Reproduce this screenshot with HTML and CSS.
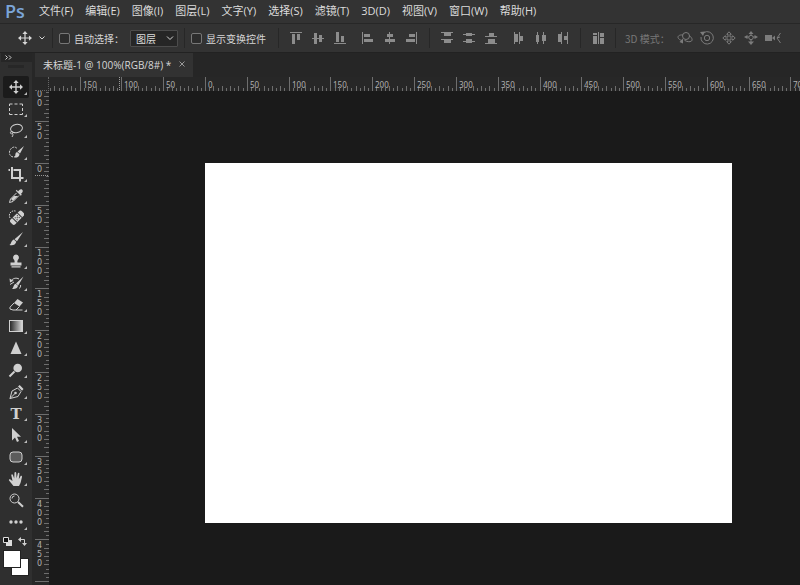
FILE: index.html
```html
<!DOCTYPE html>
<html lang="zh-CN">
<head>
    <meta charset="UTF-8">
    <meta name="viewport" content="width=device-width, initial-scale=1.0">
    <title>未标题-1</title>
    <link rel="stylesheet" href="styles.css">
</head>
<body>

    <header class="menubar">
        <span class="logo">Ps</span>
        <nav class="menu">
            <a href="#">文件(F)</a>
            <a href="#">编辑(E)</a>
            <a href="#">图像(I)</a>
            <a href="#">图层(L)</a>
            <a href="#">文字(Y)</a>
            <a href="#">选择(S)</a>
            <a href="#">滤镜(T)</a>
            <a href="#">3D(D)</a>
            <a href="#">视图(V)</a>
            <a href="#">窗口(W)</a>
            <a href="#">帮助(H)</a>
        </nav>
    </header>

    <div class="options">
        <button type="button" class="preset" aria-label="移动工具">
            <svg width="14" height="14" viewBox="0 0 16 16"><path d="M8 2v12M2 8h12" stroke="currentColor" stroke-width="1.4"/><path d="M8 0l3 3.500H5zM8 16l3-3.500H5zM0 8l3.500-3v6zM16 8l-3.500-3v6z"/></svg>
            <svg width="8" height="8" viewBox="0 0 8 8"><path class="line" d="M1.500 2.500L4 5l2.500-2.500"/></svg>
        </button>
        <span class="sep"></span>
        <label class="check"><input type="checkbox">自动选择：</label>
        <span class="select">
            <select aria-label="自动选择">
                <option>图层</option>
                <option>组</option>
            </select>
            <svg width="8" height="8" viewBox="0 0 8 8"><path class="line" d="M1 2.500l3 3 3-3"/></svg>
        </span>
        <span class="sep"></span>
        <label class="check transform"><input type="checkbox">显示变换控件</label>
        <span class="sep"></span>

        <div class="group">
            <button type="button" aria-label="顶对齐"><svg viewBox="0 0 14 14"><path d="M1 1h12v1H1zM3 3h3v10H3zM8 3h3v6H8z"/></svg></button>
            <button type="button" aria-label="垂直居中对齐"><svg viewBox="0 0 14 14"><path d="M1 7h12v1H1zM3 2h3v11H3zM8 4h3v7H8z"/></svg></button>
            <button type="button" aria-label="底对齐"><svg viewBox="0 0 14 14"><path d="M1 12h12v1H1zM3 1h3v10H3zM8 5h3v6H8z"/></svg></button>
        </div>
        <div class="group">
            <button type="button" aria-label="左对齐"><svg viewBox="0 0 14 14"><path d="M1 1h1v12H1zM3 3h6v3H3zM3 8h9v3H3z"/></svg></button>
            <button type="button" aria-label="水平居中对齐"><svg viewBox="0 0 14 14"><path d="M6 1h1v12H6zM4 3h6v3H4zM2 8h10v3H2z"/></svg></button>
            <button type="button" aria-label="右对齐"><svg viewBox="0 0 14 14"><path d="M11 1h1v12h-1zM4 3h6v3H4zM1 8h9v3H1z"/></svg></button>
        </div>
        <span class="sep"></span>
        <div class="group">
            <button type="button" aria-label="按顶分布"><svg viewBox="0 0 14 14"><path d="M1 1h12v1H1zM4 2h7v3H4zM1 8h12v1H1zM4 9h7v3H4z"/></svg></button>
            <button type="button" aria-label="垂直居中分布"><svg viewBox="0 0 14 14"><path d="M1 3h12v1H1zM4 2h6v3H4zM1 10h12v1H1zM4 8h6v4H4z"/></svg></button>
            <button type="button" aria-label="按底分布"><svg viewBox="0 0 14 14"><path d="M1 5h12v1H1zM5 2h5v3H5zM1 12h12v1H1zM4 8h7v4H4z"/></svg></button>
        </div>
        <div class="group">
            <button type="button" aria-label="按左分布"><svg viewBox="0 0 14 14"><path d="M2 1h1v12H2zM3 3h3v8H3zM7 1h1v12H7zM8 5h3v5H8z"/></svg></button>
            <button type="button" aria-label="水平居中分布"><svg viewBox="0 0 14 14"><path d="M3 1h1v12H3zM2 4h3v7H2zM9 1h1v12H9zM8 4h4v6H8z"/></svg></button>
            <button type="button" aria-label="按右分布"><svg viewBox="0 0 14 14"><path d="M5 1h1v12H5zM2 3h3v8H2zM11 1h1v12h-1zM8 5h3v4H8z"/></svg></button>
        </div>
        <span class="sep"></span>
        <div class="group">
            <button type="button" aria-label="自动对齐图层"><svg viewBox="0 0 14 14"><path d="M2 2h4v2H2zM2 5h4v8H2zM9 2h4v4H9zM9 7h4v6H9zM7 1h1v12H7z"/></svg></button>
        </div>
        <span class="sep"></span>
        <span class="mode">3D 模式：</span>
        <div class="group dim">
            <button type="button" aria-label="旋转"><svg width="16" height="14" viewBox="0 0 16 14"><circle class="line" cx="9" cy="5" r="3.500"/><path class="line" d="M6 4C2 3.500 0 5.500 1.500 7.500c1 1.300 3 2 4.500 2.200M12 4.500c2.500 1.500 4 4 2.500 5.500-1.500 1.400-5 .6-7-.7"/><path d="M6 7.500v5L2.500 11z"/></svg></button>
            <button type="button" aria-label="滚动"><svg viewBox="0 0 14 14"><path class="line" d="M4 1.500A6.200 6.200 0 1 1 1 6"/><circle class="line" cx="7" cy="7" r="2.700"/><path d="M0 1l5-.5L3 5z"/></svg></button>
            <button type="button" aria-label="平移"><svg viewBox="0 0 14 14"><path class="line" d="M7 .8l2.300 2.500H8v2.700h2.700V4.700L13.200 7l-2.500 2.300V8H8v2.700h1.300L7 13.200l-2.300-2.500H6V8H3.300v1.300L.8 7l2.500-2.300V6H6V3.300H4.700z"/></svg></button>
            <button type="button" aria-label="滑动"><svg viewBox="0 0 14 14"><path d="M7 0l2.500 3h-5zM0 6l3.500-2v4zM14 6l-3.500-2v4zM7 14l3-3.500H4z"/><path class="line" d="M7 2v2M3 6h2M11 6H9M7 8.500V11"/><circle class="line" cx="7" cy="6.500" r="2.200"/></svg></button>
            <button type="button" aria-label="缩放相机"><svg width="16" height="14" viewBox="0 0 16 14"><path d="M0 4h7v6H0zM7 7l3-2.500v5z"/><path class="line" d="M15.500 2L12 7l3.500 5M12 7l3-1"/></svg></button>
        </div>
    </div>

    <div class="workspace">
        <aside class="toolbox">
            <div class="toolbox-head"><svg width="7" height="5" viewBox="0 0 7 5"><path class="line" d="M.5 .5l2 2-2 2M4 .5l2 2-2 2"/></svg></div>
            <div class="grip"></div>
            <div class="tools">
                <button type="button" class="tool active" aria-label="移动工具"><svg viewBox="0 0 16 16"><path d="M8 2v12M2 8h12" stroke="currentColor" stroke-width="1.400"/><path d="M8 1l2.700 3H5.300zM8 15l2.700-3H5.300zM1 8l3-2.700v5.400zM15 8l-3-2.700v5.400z"/></svg></button>
                <button type="button" class="tool" aria-label="矩形选框工具"><svg viewBox="0 0 16 16"><path class="line" d="M1.500 5V3h3M6.500 3h3M11.500 3h3v2M14.500 7v3M14.500 12v1.500h-3M9.500 13.500h-3M4.500 13.500h-3V12M1.500 10V7"/></svg></button>
                <button type="button" class="tool" aria-label="套索工具"><svg viewBox="0 0 16 16"><ellipse class="line" cx="8.500" cy="6.500" rx="6" ry="4.200" transform="rotate(-12 8.500 6.500)"/><path class="line" d="M3 9.500c-1.500 1.500 0 3 1.500 2s0-2.500-1.500-1.500M4.700 11.500c.5 1 .2 2.300-.7 3.500"/></svg></button>
                <button type="button" class="tool" aria-label="快速选择工具"><svg viewBox="0 0 16 16"><path class="line" stroke-dasharray="2 1" d="M8 12.500c-4 1.500-7-1-6.500-4.500C2 3.500 7 1.500 9 4.500"/><path d="M16 2L12 9.500 9.500 7.500zM9 8l2.500 2c0 2.500-2 3.800-5 3.600C8 12 6.500 9 9 8z"/></svg></button>
                <button type="button" class="tool" aria-label="裁剪工具"><svg viewBox="0 0 16 16"><path class="line bold" d="M4 1v11h7.500M13 12h2.500M.5 4H2M5.500 4H12v11.500"/></svg></button>
                <button type="button" class="tool" aria-label="吸管工具"><svg viewBox="0 0 16 16"><path d="M10 3.500c1-1.500 2.500-3 4-2s.8 3-1 4.200l.8 1-1 1-5-5 1-1z"/><path class="line" d="M8.500 5L2.500 11l-1 3.500L5 13.500l6-6"/><path d="M3 11l3-3h4L5 13z"/></svg></button>
                <button type="button" class="tool" aria-label="污点修复画笔工具"><svg viewBox="0 0 16 16"><g transform="rotate(-45 9 8.500)"><rect x="1" y="5.500" width="16" height="6.500" rx="2"/><path d="M5.500 5v7M12.500 5v7" stroke="#2f2f2f"/><path fill="#2f2f2f" d="M7 7h1v1H7zM10 7h1v1h-1zM8.500 8.300h1v1h-1zM7 9.600h1v1H7zM10 9.600h1v1h-1z"/></g><path class="line" stroke-dasharray="1.500 1" d="M2 9C0 5 3 1 7.500 2"/></svg></button>
                <button type="button" class="tool" aria-label="画笔工具"><svg viewBox="0 0 16 16"><path d="M15 1L9 10.300 6.500 8.200zM5.800 8.500l2.500 2.200C7.500 13.500 5 15 1.500 14c1.800-.8 1.500-4.500 4.300-5.500z"/></svg></button>
                <button type="button" class="tool" aria-label="仿制图章工具"><svg viewBox="0 0 16 16"><path d="M8 1.500a3 3 0 0 1 2 5.200c-.7.800-.7 1.800-.5 2.800h4v3h-11v-3h4c.2-1 .2-2-.5-2.800A3 3 0 0 1 8 1.500zM3.500 13.300h9v1.200h-9z"/></svg></button>
                <button type="button" class="tool" aria-label="历史记录画笔工具"><svg viewBox="0 0 16 16"><path d="M15.500 1.500L10.200 10.500 8 8.500zM7.500 8.800l2.500 2c-.5 2.500-3 3.700-6 3.200 1.600-1 1.200-4 3.500-5.200z"/><path class="line" d="M3 6c2-3 5.500-3.500 8-2M12.500 10c.5 1.500-.3 2.700-1.300 3.500M2 9.500L6 7"/><path d="M1.500 3.500l.5 4 3.500-1.800z"/></svg></button>
                <button type="button" class="tool" aria-label="橡皮擦工具"><svg viewBox="0 0 16 16"><path d="M9.500 3L15 6.500l-3.500 4L6 7z"/><path class="line" d="M6 7l-4 4.200v1.800L5 14h3l3.500-3.500M8 14h6.500"/></svg></button>
                <button type="button" class="tool" aria-label="渐变工具"><svg viewBox="0 0 16 16"><defs><linearGradient id="fade"><stop offset="0" stop-color="#222"/><stop offset="1" stop-color="#ddd"/></linearGradient></defs><rect x="1.500" y="2.500" width="13" height="11" fill="url(#fade)" stroke="currentColor"/></svg></button>
                <button type="button" class="tool" aria-label="锐化工具"><svg viewBox="0 0 16 16"><path d="M8 1.500L13.500 14h-11z"/></svg></button>
                <button type="button" class="tool" aria-label="减淡工具"><svg viewBox="0 0 16 16"><circle cx="9.700" cy="6" r="4.300"/><path class="line bold" d="M6.500 9.500L1.500 14.500"/></svg></button>
                <button type="button" class="tool" aria-label="钢笔工具"><svg viewBox="0 0 16 16"><path class="line" d="M2 14.500l2-7.500 5.500-3 3.500 3.500L10 12.500zM2 14.500l5-5"/><circle cx="7.500" cy="9" r="1.300"/><path d="M10 2.500l1.700-1.500L15.500 5 14 6.700z"/></svg></button>
                <button type="button" class="tool type" aria-label="文字工具">T</button>
                <button type="button" class="tool" aria-label="路径选择工具"><svg viewBox="0 0 16 16"><path d="M4 1v12.500l3-3 2 4.500 2-1-2-4.300h4z"/></svg></button>
                <button type="button" class="tool" aria-label="圆角矩形工具"><svg viewBox="0 0 16 16"><rect x="2" y="3" width="12" height="10" rx="3" fill="#5c5c5c" stroke="currentColor"/></svg></button>
                <button type="button" class="tool" aria-label="抓手工具"><svg viewBox="0 0 16 16"><path d="M5.500 15L1 9.500c-.5-1 .8-1.700 1.700-.8L4.500 10 3.300 4.200c0-1.200 1.400-1.200 1.700 0L6.200 7.500 6.500 1.800c.1-1.200 1.600-1.200 1.700 0l.4 5.500 1.200-4.800c.4-1 1.700-.8 1.600.4l-.6 5.400 1.700-3c.6-.9 1.700-.3 1.500.7L12.500 12l-1.500 3z"/></svg></button>
                <button type="button" class="tool single" aria-label="缩放工具"><svg viewBox="0 0 16 16"><circle class="line" cx="6.500" cy="6.500" r="4.500"/><path class="line" d="M4 6.500A2.500 2.500 0 0 1 6.500 4"/><path class="line bold" d="M10 10l5 4.800"/></svg></button>
                <button type="button" class="tool" aria-label="编辑工具栏"><svg viewBox="0 0 16 16"><circle cx="3" cy="8" r="1.700"/><circle cx="8" cy="8" r="1.700"/><circle cx="13" cy="8" r="1.700"/></svg></button>
            </div>
            <div class="swap">
                <button type="button" aria-label="默认前景色和背景色"><svg width="9" height="9" viewBox="0 0 9 9"><path fill="#ddd" d="M3 3h6v6H3z"/><path fill="#111" stroke="#ddd" d="M.5 .5h5v5h-5z"/></svg></button>
                <button type="button" aria-label="切换前景色和背景色"><svg width="9" height="9" viewBox="0 0 9 9"><path class="line" d="M2 2.500h4.500V7"/><path d="M0 2.500L3 0v5zM6.500 9L4 6h5z"/></svg></button>
            </div>
            <div class="colors">
                <button type="button" class="background" aria-label="背景色"></button>
                <button type="button" class="foreground" aria-label="前景色"></button>
            </div>
        </aside>

        <main class="document">
            <div class="tabs">
                <div class="tab">
                    <span>未标题-1 @ 100%(RGB/8#) *</span>
                    <button type="button" aria-label="关闭"><svg width="6" height="6" viewBox="0 0 6 6"><path class="line" d="M.5 .5l5 5M5.500 .5l-5 5"/></svg></button>
                </div>
            </div>
            <div class="view">
                <div class="corner"></div>
                <div class="ruler ruler-x"><svg id="rulerX"></svg></div>
                <div class="ruler ruler-y"><svg id="rulerY"></svg></div>
                <div class="pasteboard">
                    <div class="page"></div>
                </div>
            </div>
        </main>
    </div>

    <script src="script.js"></script>
</body>
</html>
```
FILE: styles.css
```css
* {
    box-sizing: border-box;
}
body {
    display: flex;
    flex-direction: column;
    height: 100vh;
    margin: 0;
    overflow: hidden;
    background-color: #1a1a1a;
    color: #d6d6d6;
    font-family: "Noto Sans CJK SC", sans-serif;
    font-size: 11px;
}
button {
    display: flex;
    align-items: center;
    justify-content: center;
    padding: 0;
    border: none;
    background: none;
    color: inherit;
    font: inherit;
}
svg {
    display: block;
    flex: none;
    fill: currentColor;
}
.line {
    fill: none;
    stroke: currentColor;
}
.bold {
    stroke-width: 2;
}

/* menu */
.menubar {
    display: flex;
    flex: none;
    align-items: center;
    height: 24px;
    padding: 0 0 2px 5px;
    border-bottom: 1px solid #272727;
    background-color: #333;
}
.logo {
    width: 34px;
    color: #7ba5d8;
    font-family: "Open Sans", sans-serif;
    font-size: 18px;
    font-weight: 600;
    line-height: 20px;
}
.menu {
    display: flex;
    gap: 12px;
    font-family: "Open Sans", "Noto Sans CJK SC", sans-serif;
}
.menu a {
    color: #dcdcdc;
    line-height: 20px;
    text-decoration: none;
    white-space: nowrap;
}

/* options bar */
.options {
    display: flex;
    flex: none;
    align-items: center;
    gap: 6px;
    height: 29px;
    padding-left: 17px;
    border-bottom: 1px solid #222;
    background-color: #333;
    font-size: 10px;
    white-space: nowrap;
}
.preset {
    gap: 6px;
    width: 29px;
}
.sep {
    width: 1px;
    height: 20px;
    background-color: #272727;
}
.check {
    display: flex;
    align-items: center;
    gap: 4px;
}
.transform {
    padding-right: 6px;
}
.check input {
    appearance: none;
    width: 11px;
    height: 11px;
    margin: 0;
    border: 1px solid #777;
    border-radius: 2px;
    background-color: #2c2c2c;
}
.select {
    display: flex;
    position: relative;
    align-items: center;
}
.select select {
    appearance: none;
    width: 48px;
    height: 17px;
    padding: 0 5px;
    border: 1px solid #4c4c4c;
    border-radius: 1px;
    background-color: #262626;
    color: #dcdcdc;
    font: inherit;
}
.select svg {
    position: absolute;
    right: 4px;
    pointer-events: none;
}
.group {
    display: flex;
    color: #8c8c8c;
}
.group button {
    width: 22px;
    height: 20px;
}
.group svg {
    height: 14px;
}
.mode {
    width: 46px;
    padding-left: 3px;
    color: #777;
}
.dim {
    color: #7c7c7c;
}

/* tools */
.workspace {
    display: flex;
    flex: 1;
    min-height: 0;
}
.toolbox {
    flex: none;
    width: 35px;
    padding-left: 1px;
    border-right: 3px solid #272727;
    background-color: #2f2f2f;
    color: #d0d0d0;
}
.toolbox-head {
    height: 9px;
    padding: 2px 4px;
    background-color: #262626;
}
.grip {
    width: 16px;
    height: 3px;
    margin: 3px 7px 8px;
    background-color: #272727;
}
.tools {
    display: grid;
    grid-auto-rows: 1fr;
    height: 457px;
    padding-left: 2px;
}
.tool {
    position: relative;
    width: 26px;
    border-radius: 2px;
}
.tool svg {
    width: 16px;
    height: 16px;
}
.tool::after {
    content: "";
    position: absolute;
    right: 2px;
    bottom: 3px;
    border-bottom: 3px solid #bbb;
    border-left: 3px solid transparent;
}
.single::after {
    display: none;
}
.active {
    background-color: #1b1b1b;
}
.type {
    padding-top: 2px;
    font-family: "DejaVu Serif", serif;
    font-size: 15px;
    font-weight: bold;
}
.swap {
    display: flex;
    gap: 6px;
    padding: 4px 2px 5px;
}
.colors {
    display: grid;
    grid-template-columns: 8px 8px 8px;
    grid-template-rows: 8px 8px 8px;
    padding-left: 3px;
}
.foreground,
.background {
    outline: 1px solid #222;
    background-color: #fff;
}
.foreground {
    grid-area: 1 / 1 / 3 / 3;
}
.background {
    grid-area: 2 / 2 / 4 / 4;
}

/* document */
.document {
    display: flex;
    flex: 1;
    flex-direction: column;
    min-width: 0;
}
.tabs {
    display: flex;
    flex: none;
    height: 24px;
    background-color: #262626;
}
.tab {
    display: flex;
    align-items: center;
    gap: 8px;
    padding: 0 8px 2px;
    background-color: #323232;
    font-family: "Open Sans", "Noto Sans CJK SC", sans-serif;
    font-size: 10px;
    white-space: nowrap;
}
.tab button {
    color: #999;
}
.view {
    display: grid;
    flex: 1;
    grid-template-columns: 14px 1fr;
    grid-template-rows: 14px 1fr;
    min-height: 0;
}
.corner,
.ruler {
    overflow: hidden;
    background-color: #272727;
}
.corner {
    border-right: 1px dotted #666;
    border-bottom: 1px dotted #666;
}
.ruler svg {
    width: 100%;
    height: 100%;
}
.ruler line {
    stroke: #6e6e6e;
    shape-rendering: crispEdges;
}
.ruler .cursor {
    stroke: #999;
    stroke-dasharray: 1 1;
}
.ruler text {
    fill: #b0b0b0;
    font-family: "Noto Sans", sans-serif;
    font-size: 8px;
}
.ruler-y text {
    font-family: "DejaVu Sans", sans-serif;
}
.pasteboard {
    padding: 72px 0 0 156px;
    overflow: hidden;
    background-color: #1a1a1a;
}
.page {
    width: 527px;
    height: 360px;
    background-color: #fff;
}
```
FILE: script.js
```js
const SVG = "http://www.w3.org/2000/svg";
const STEP = 41.82 / 10; // distance between two small ticks
const SIZE = 14;

function add(parent, name, attrs, text) {
    const el = document.createElementNS(SVG, name);
    for (const key in attrs) {
        el.setAttribute(key, attrs[key]);
    }
    if (text !== undefined) {
        el.textContent = text;
    }
    parent.appendChild(el);
}

function tickLength(i) {
    if (i % 10 === 0) return SIZE;
    return i % 2 === 0 ? 5 : 3;
}

function drawRulerX(svg, origin, cursor) {
    const width = svg.clientWidth;
    for (let i = -Math.floor(origin / STEP); origin + i * STEP < width; i++) {
        const x = Math.round(origin + i * STEP) + 0.5;
        add(svg, "line", { x1: x, x2: x, y1: SIZE - tickLength(i), y2: SIZE });
        if (i % 10 === 0) {
            add(svg, "text", { x: x + 2.5, y: 11 }, Math.abs(i * 5));
        }
    }
    add(svg, "line", { class: "cursor", x1: cursor, x2: cursor, y1: 0, y2: SIZE });
}

function drawRulerY(svg, origin, cursor) {
    const height = svg.clientHeight;
    for (let i = -20; origin + i * STEP < height; i++) {
        const y = Math.round(origin + i * STEP) + 0.5;
        add(svg, "line", { x1: SIZE - tickLength(i), x2: SIZE, y1: y, y2: y });
        if (i % 10 === 0) {
            // digits are stacked one under the other
            String(Math.abs(i * 5)).split("").forEach((digit, n) => {
                const base = y + 8 + n * 9;
                if (base > 0 && base < height) {
                    add(svg, "text", { x: 2, y: base }, digit);
                }
            });
        }
    }
    add(svg, "line", { class: "cursor", x1: 0, x2: SIZE, y1: cursor, y2: cursor });
}

drawRulerX(document.getElementById("rulerX"), 156, 70.5);
drawRulerY(document.getElementById("rulerY"), 72, 84.5);
```
